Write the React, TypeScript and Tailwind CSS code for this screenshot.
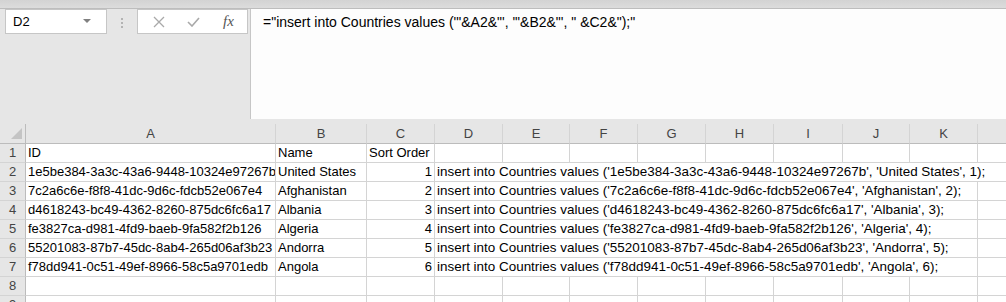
import type { ReactNode } from 'react';

type Col = { key: string; w: number; label?: boolean };

const columns: Col[] = [
  { key: 'A', w: 250 },
  { key: 'B', w: 91 },
  { key: 'C', w: 68 },
  { key: 'D', w: 68 },
  { key: 'E', w: 67 },
  { key: 'F', w: 68 },
  { key: 'G', w: 68 },
  { key: 'H', w: 68 },
  { key: 'I', w: 69 },
  { key: 'J', w: 67 },
  { key: 'K', w: 68 },
  { key: 'L', w: 68, label: false },
];

const rows = [
  { id: '1e5be384-3a3c-43a6-9448-10324e97267b', name: 'United States', order: 1, span: 9 },
  { id: '7c2a6c6e-f8f8-41dc-9d6c-fdcb52e067e4', name: 'Afghanistan', order: 2, span: 8 },
  { id: 'd4618243-bc49-4362-8260-875dc6fc6a17', name: 'Albania', order: 3, span: 8 },
  { id: 'fe3827ca-d981-4fd9-baeb-9fa582f2b126', name: 'Algeria', order: 4, span: 8 },
  { id: '55201083-87b7-45dc-8ab4-265d06af3b23', name: 'Andorra', order: 5, span: 8 },
  { id: 'f78dd941-0c51-49ef-8966-58c5a9701edb', name: 'Angola', order: 6, span: 8 },
];

const font = { fontFamily: '"Liberation Sans", Arial, sans-serif' };

function RowHead({ n }: { n: number | string }) {
  return (
    <div className="flex h-[19px] w-[26px] shrink-0 items-center justify-center border-r border-b border-r-[#bcbcbc] border-b-[#d4d4d4] bg-[#e6e6e6] text-[13px] text-[#444]">
      {n}
    </div>
  );
}

function Cell({ w, children, right, overflow }: { w: number; children?: ReactNode; right?: boolean; overflow?: boolean }) {
  return (
    <div
      className={`flex h-[19px] shrink-0 items-center border-r border-b border-[#d4d4d4] bg-white px-[2px] text-[13px] text-black whitespace-nowrap ${right ? 'justify-end' : ''} ${overflow ? 'overflow-visible' : 'overflow-hidden'}`}
      style={{ width: w }}
    >
      {children}
    </div>
  );
}

function DataRow({ n, cells }: { n: number; cells: { w: number; text?: string; right?: boolean }[] }) {
  return (
    <div className="flex">
      <RowHead n={n} />
      {cells.map((c, i) => (
        <Cell key={i} w={c.w} right={c.right}>
          {c.text}
        </Cell>
      ))}
    </div>
  );
}

export default function App() {
  const w = (k: string) => columns.find(c => c.key === k)!.w;

  return (
    <div className="h-[302px] w-[1006px] overflow-hidden bg-[#e6e6e6]" style={font}>
      {/* ribbon edge */}
      <div className="h-[9px] border-b border-[#bdbdbd] bg-gradient-to-b from-[#d3d3d3] to-[#dcdcdc]" />

      {/* formula bar */}
      <div className="flex h-[110px]">
        <div className="flex w-[250px] shrink-0 items-start pl-[5px]">
          <div className="flex h-[25px] w-[102px] items-center justify-between border border-[#c6c6c6] bg-white pl-[7px] pr-[15px] text-[13px] text-black">
            <span>D2</span>
            <svg width="8" height="5" viewBox="0 0 8 5">
              <path d="M0 0 L8 0 L4 4 Z" fill="#808080" />
            </svg>
          </div>
          <div className="flex w-[30px] flex-col items-center gap-[2px] pt-[9px]">
            <span className="h-[2px] w-[2px] bg-[#b3b3b3]" />
            <span className="h-[2px] w-[2px] bg-[#b3b3b3]" />
            <span className="h-[2px] w-[2px] bg-[#b3b3b3]" />
          </div>
          <div className="flex h-[25px] w-[111px] items-center border border-[#c6c6c6] bg-white">
            <svg className="ml-[15px]" width="12" height="12" viewBox="0 0 12 12">
              <path d="M1 1 L11 11 M11 1 L1 11" stroke="#a9a9a9" strokeWidth="1.3" />
            </svg>
            <svg className="ml-[22px]" width="13" height="10" viewBox="0 0 13 10">
              <path d="M1 5 L5 9 L12 1" stroke="#a9a9a9" strokeWidth="1.6" fill="none" />
            </svg>
            <span
              className="ml-[23px] text-[15px] italic text-[#555]"
              style={{ fontFamily: '"Liberation Serif", "Times New Roman", serif' }}
            >
              fx
            </span>
          </div>
        </div>
        <div className="flex-1 border-l border-[#c6c6c6] bg-[#fdfdfd] pl-[12px] pt-[3px] text-[14px] leading-[20px] text-black">
          ="insert into Countries values ('"&A2&"', '"&B2&"', " &C2&");"
        </div>
      </div>

      <div className="h-[5px]" />

      {/* column headers */}
      <div className="flex">
        <div className="flex h-[20px] w-[26px] shrink-0 items-end justify-end border-r border-b border-[#bcbcbc] bg-[#e6e6e6] pr-[3px] pb-[4px]">
          <svg width="11" height="11" viewBox="0 0 11 11">
            <path d="M11 0 L11 11 L0 11 Z" fill="#c4c4c4" />
          </svg>
        </div>
        {columns.map(c => (
          <div
            key={c.key}
            className="flex h-[20px] shrink-0 items-center justify-center border-r border-b border-r-[#d4d4d4] border-b-[#bcbcbc] bg-[#e6e6e6] text-[13px] text-[#444]"
            style={{ width: c.w }}
          >
            {c.label === false ? null : c.key}
          </div>
        ))}
      </div>

      {/* row 1 */}
      <DataRow
        n={1}
        cells={[
          { w: w('A'), text: 'ID' },
          { w: w('B'), text: 'Name' },
          { w: w('C'), text: 'Sort Order' },
          ...columns.slice(3).map(c => ({ w: c.w })),
        ]}
      />

      {rows.map((r, i) => {
        const spanned = columns.slice(3, 3 + r.span);
        const rest = columns.slice(3 + r.span);
        const spanW = spanned.reduce((s, c) => s + c.w, 0);
        return (
          <div key={r.id} className="flex">
            <RowHead n={i + 2} />
            <Cell w={w('A')}>{r.id}</Cell>
            <Cell w={w('B')}>{r.name}</Cell>
            <Cell w={w('C')} right>{r.order}</Cell>
            <Cell w={spanW} overflow>
              <span className="text-[13.45px]">
                insert into Countries values ('{r.id}', '{r.name}', {r.order});
              </span>
            </Cell>
            {rest.map(c => (
              <Cell key={c.key} w={c.w} />
            ))}
          </div>
        );
      })}

      <DataRow n={8} cells={columns.map(c => ({ w: c.w }))} />
      <DataRow n={9} cells={columns.map(c => ({ w: c.w }))} />
    </div>
  );
}
